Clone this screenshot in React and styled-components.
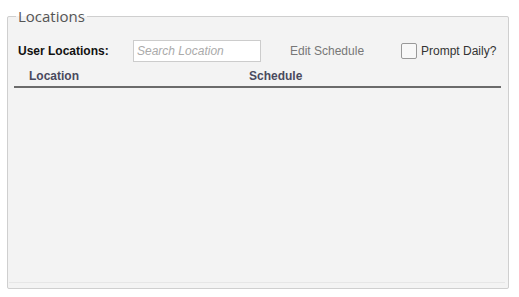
import React from 'react'
import styled, { createGlobalStyle } from 'styled-components';

const Global = createGlobalStyle`
    html, body {
        margin: 0;
        padding: 0;
        background: #ffffff;
        font-family: "Open Sans", "Liberation Sans", Arial, sans-serif;
    }
`

const Page = styled.div`
    padding: 6px 10px 0 7px;
    width: 502px;
`

const Fieldset = styled.fieldset`
    margin: 0;
    padding: 0 6px 0 6px;
    border: 1px solid #cfcfcf;
    border-radius: 2px;
    background-color: #f3f3f3;
    height: 283px;
    box-sizing: border-box;
    display: flex;
    flex-direction: column;
`

const Legend = styled.legend`
    font-family: "Open Sans", sans-serif;
    font-size: 15px;
    line-height: 20px;
    color: #555555;
    padding: 0 2px;
    margin-left: 2px;
`

const Toolbar = styled.div`
    display: flex;
    align-items: center;
    height: 22px;
    margin-top: 14px;
    font-family: "Liberation Sans", Arial, sans-serif;
    font-size: 12px;
`

const Label = styled.span`
    font-weight: bold;
    color: #111;
    width: 115px;
    padding-left: 4px;
`

const Search = styled.input`
    width: 128px;
    height: 22px;
    box-sizing: border-box;
    border: 1px solid #cccccc;
    background: #ffffff;
    padding: 0 3px;
    font-family: "Liberation Sans", Arial, sans-serif;
    font-size: 12px;
    outline: none;
    &::placeholder {
        color: #aaaaaa;
        font-style: italic;
    }
`

const LinkText = styled.span`
    color: #777777;
    margin-left: 29px;
    width: 111px;
`

const Check = styled.label`
    display: flex;
    align-items: center;
    gap: 4px;
    color: #333333;
    input {
        appearance: none;
        width: 16px;
        height: 16px;
        margin: 0;
        border: 1px solid #999999;
        border-radius: 2px;
        background: #f8f8f8;
        box-sizing: border-box;
    }
`

const Table = styled.div`
    flex: 1;
    display: flex;
    flex-direction: column;
    margin-right: 1px;
`

const HeadRow = styled.div`
    display: grid;
    grid-template-columns: 220px 1fr;
    height: 22px;
    align-items: center;
    margin-top: 2px;
    border-bottom: 2px solid #6b6b6b;
    font-family: "Liberation Sans", Arial, sans-serif;
    font-size: 12px;
    font-weight: bold;
    color: #4a4a5e;
    span {
        padding-left: 15px;
        padding-top: 1px;
    }
`

const Body = styled.div`
    flex: 1;
    border-bottom: 1px solid #e6e6e6;
    margin: 0 -4px 5px -5px;
`

const App = () => {
    return (
        <Page>
            <Global />
            <Fieldset>
                <Legend>Locations</Legend>
                <Toolbar>
                    <Label>User Locations:</Label>
                    <Search placeholder="Search Location" />
                    <LinkText>Edit Schedule</LinkText>
                    <Check>
                        <input type="checkbox" />
                        Prompt Daily?
                    </Check>
                </Toolbar>
                <Table>
                    <HeadRow>
                        <span>Location</span>
                        <span>Schedule</span>
                    </HeadRow>
                    <Body />
                </Table>
            </Fieldset>
        </Page>
    )
}

export default App;
